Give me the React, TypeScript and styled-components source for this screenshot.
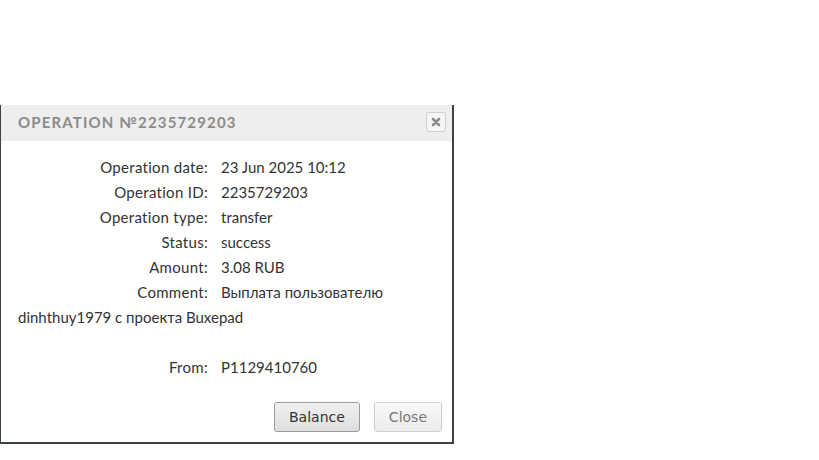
import React from "react";
import styled, { createGlobalStyle } from "styled-components";

const GlobalStyle = createGlobalStyle`
  html, body {
    margin: 0;
    padding: 0;
    background: #ffffff;
  }
  body {
    font-family: Lato, "Noto Sans", sans-serif;
  }
`;

const Page = styled.div`
  width: 819px;
  height: 460px;
  padding-top: 105px;
  box-sizing: border-box;
`;

const Dialog = styled.div`
  width: 454px;
  box-sizing: border-box;
  background: #fff;
  border-left: 1px solid #3b4248;
  border-right: 2px solid #3b4248;
  border-bottom: 2px solid #3b4248;
`;

const Header = styled.div`
  height: 36px;
  box-sizing: border-box;
  background: #eeeeee;
  display: flex;
  align-items: center;
  justify-content: space-between;
  padding: 0 6px 2px 17px;
`;

const Title = styled.div`
  font-family: Lato, sans-serif;
  font-weight: 700;
  font-size: 15px;
  letter-spacing: 1.15px;
  color: #8b8b8b;
  text-transform: uppercase;
`;

const CloseIcon = styled.button`
  width: 20px;
  height: 20px;
  padding: 0;
  border: 1px solid #cfcfcf;
  border-radius: 3px;
  background: #f6f6f6;
  display: flex;
  align-items: center;
  justify-content: center;
  cursor: pointer;
`;

const Body = styled.div`
  padding: 14px 16px 0 17px;
  font-size: 15px;
  line-height: 25px;
  color: #333;
`;

const Row = styled.div``;

const Label = styled.span`
  display: inline-block;
  width: 190px;
  text-align: right;
  margin-right: 13px;
  letter-spacing: 0.3px;
`;

const Gap = styled.div`
  height: 25px;
`;

const Footer = styled.div`
  display: flex;
  justify-content: flex-end;
  gap: 14px;
  padding: 22px 10px 10px 0;
`;

const Button = styled.button<{ $muted?: boolean }>`
  height: 30px;
  padding: 0 14px;
  font-family: "DejaVu Sans", Verdana, sans-serif;
  font-size: 14px;
  border-radius: 3px;
  cursor: pointer;
  color: ${(p) => (p.$muted ? "#777" : "#333")};
  border: 1px solid ${(p) => (p.$muted ? "#d0d0d0" : "#9a9a9a")};
  background: ${(p) =>
    p.$muted
      ? "linear-gradient(#f8f8f8, #ececec)"
      : "linear-gradient(#f0f0f0, #dedede)"};
`;

const rows: [string, string][] = [
  ["Operation date:", "23 Jun 2025 10:12"],
  ["Operation ID:", "2235729203"],
  ["Operation type:", "transfer"],
  ["Status:", "success"],
  ["Amount:", "3.08 RUB"],
];

export default function App() {
  return (
    <Page>
      <GlobalStyle />
      <Dialog>
        <Header>
          <Title>Operation №2235729203</Title>
          <CloseIcon aria-label="close">
            <svg width="10" height="10" viewBox="0 0 10 10">
              <path
                d="M2 2 L8 8 M8 2 L2 8"
                stroke="#8a8a8a"
                strokeWidth="2.6"
                strokeLinecap="round"
              />
            </svg>
          </CloseIcon>
        </Header>
        <Body>
          {rows.map(([k, v]) => (
            <Row key={k}>
              <Label>{k}</Label>
              {v}
            </Row>
          ))}
          <Row>
            <Label>Comment:</Label>
            Выплата пользователю dinhthuy1979 с проекта Buxepad
          </Row>
          <Gap />
          <Row>
            <Label>From:</Label>
            P1129410760
          </Row>
        </Body>
        <Footer>
          <Button>Balance</Button>
          <Button $muted>Close</Button>
        </Footer>
      </Dialog>
    </Page>
  );
}
